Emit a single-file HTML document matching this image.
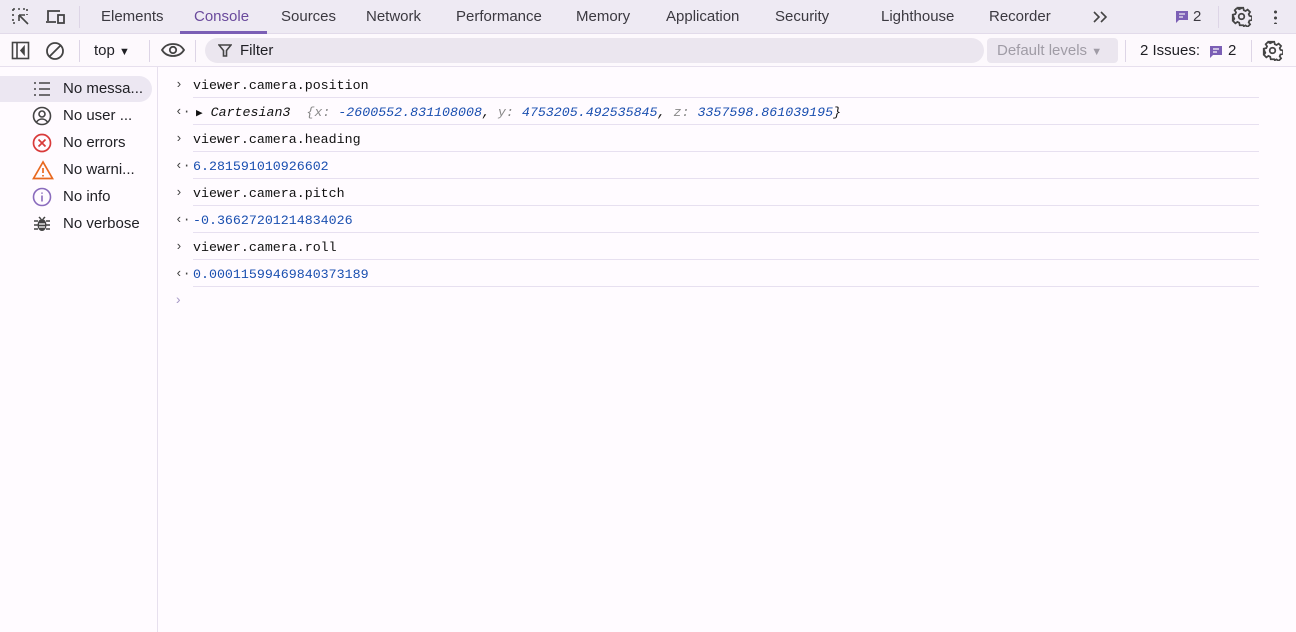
<!DOCTYPE html>
<html><head><meta charset="utf-8"><style>
*{box-sizing:border-box;margin:0;padding:0}
body{width:1296px;height:632px;overflow:hidden;background:#fffbff;font-family:"Liberation Sans",sans-serif;color:#1f1f24;position:relative}
.tabs{position:absolute;left:0;top:0;width:1296px;height:34px;background:#eeeaf3;border-bottom:1px solid #e2dbea}
.tab{position:absolute;top:8px;font-size:15px;color:#3b3940}
.toolbar{position:absolute;left:0;top:34px;width:1296px;height:33px;background:#fdf9fd;border-bottom:1px solid #e7e0ee}
.sep{position:absolute;width:1px;background:#ddd5e6}
.side{position:absolute;left:0;top:67px;width:158px;height:565px;border-right:1px solid #e7e0ee}
.si{position:absolute;left:0;height:26px;width:152px;font-size:15px;color:#1f1f24}
.si span{position:absolute;left:63px;top:4px}
.si svg{position:absolute;left:32px;top:3px}
.mono{font-family:"Liberation Mono",monospace;font-size:13.3px;color:#111}
.row{position:absolute;left:172px;width:1087px;height:27px}
.row:after{content:"";position:absolute;left:21px;right:0;bottom:0;border-bottom:1px solid #e7e0f0}
.row.nb:after{display:none}
.row .t{position:absolute;left:21px;top:7px}
.row .a{position:absolute;left:3px;top:6px;color:#444;font-size:13px}
.num{color:#1a4fb0}
</style></head><body>
<div class="tabs">
<svg style="position:absolute;left:11px;top:7px" width="20" height="20" viewBox="0 0 20 20" fill="none" stroke="#444" stroke-width="1.6"><path d="M2 2h2M7 2h2M12 2h2M2 2v2M2 7v2M2 12v2M2 16h2M16 2v2M16 7v1"/><path d="M8 8l9 9M8 8h6M8 8v6"/></svg>
<svg style="position:absolute;left:45px;top:7px" width="22" height="20" viewBox="0 0 22 20" fill="none" stroke="#444" stroke-width="1.8"><path d="M3 14V4h12M1 15h10"/><rect x="13" y="8" width="6" height="8"/></svg>
<div class="sep" style="left:79px;top:6px;height:22px"></div>
<div class="tab" style="left:101px">Elements</div>
<div class="tab" style="left:194px;color:#6a4a9c">Console</div>
<div style="position:absolute;left:180px;top:31px;width:87px;height:3px;background:#7b5fb5"></div>
<div class="tab" style="left:281px">Sources</div>
<div class="tab" style="left:366px">Network</div>
<div class="tab" style="left:456px">Performance</div>
<div class="tab" style="left:576px">Memory</div>
<div class="tab" style="left:666px">Application</div>
<div class="tab" style="left:775px">Security</div>
<div class="tab" style="left:881px">Lighthouse</div>
<div class="tab" style="left:989px">Recorder</div>
<svg style="position:absolute;left:1092px;top:10px" width="16" height="14" viewBox="0 0 16 14" fill="none" stroke="#444" stroke-width="1.6"><path d="M2 2l5 5-5 5M9 2l5 5-5 5"/></svg>
<svg style="position:absolute;left:1175px;top:10px" width="14" height="14" viewBox="0 0 14 14"><path d="M1 1h12v9H4l-3 3z" fill="#7b5fb5"/><path d="M4 4h6M4 7h4" stroke="#eeeaf3" stroke-width="1.3"/></svg>
<div class="tab" style="left:1193px">2</div>
<div class="sep" style="left:1218px;top:6px;height:22px"></div>
<svg style="position:absolute;left:1231px;top:6px" width="21" height="21" viewBox="0 0 24 24" fill="none" stroke="#444" stroke-width="2"><path d="M10 2h4l.6 2.8 2 .9 2.4-1.6 2.8 2.8-1.6 2.4.9 2 2.9.7v4l-2.9.6-.9 2 1.6 2.4-2.8 2.8-2.4-1.6-2 .9L14 22h-4l-.6-2.9-2-.9-2.4 1.6-2.8-2.8 1.6-2.4-.9-2L2 14v-4l2.9-.7.9-2-1.6-2.4 2.8-2.8 2.4 1.6 2-.9z"/><circle cx="12" cy="12" r="3.2"/></svg>
<div style="position:absolute;left:1274px;top:9px;width:3px;height:15px;background:radial-gradient(circle,#444 1.4px,transparent 1.6px) 0 0/3px 6px repeat-y"></div>
</div>
<div class="toolbar">
<svg style="position:absolute;left:11px;top:7px" width="19" height="19" viewBox="0 0 19 19" fill="none" stroke="#444" stroke-width="1.6"><rect x="1.5" y="1.5" width="16" height="16"/><path d="M6 2v15"/><path d="M13 6l-3 3.5 3 3.5z" fill="#444"/></svg>
<svg style="position:absolute;left:45px;top:7px" width="20" height="20" viewBox="0 0 20 20" fill="none" stroke="#444" stroke-width="1.8"><circle cx="10" cy="10" r="8"/><path d="M4.5 15.5l11-11"/></svg>
<div class="sep" style="left:79px;top:6px;height:22px"></div>
<div style="position:absolute;left:94px;top:8px;font-size:15px">top <span style="font-size:11px">&#9660;</span></div>
<div class="sep" style="left:149px;top:6px;height:22px"></div>
<svg style="position:absolute;left:161px;top:8px" width="24" height="16" viewBox="0 0 24 16" fill="none" stroke="#444" stroke-width="1.8"><path d="M1 8c5-8 17-8 22 0c-5 8-17 8-22 0z"/><circle cx="12" cy="8" r="3.2"/></svg>
<div class="sep" style="left:195px;top:6px;height:22px"></div>
<div style="position:absolute;left:205px;top:4px;width:779px;height:25px;border-radius:13px;background:#ebe6ef"></div>
<svg style="position:absolute;left:218px;top:10px" width="14" height="13" viewBox="0 0 14 13" fill="none" stroke="#444" stroke-width="1.6"><path d="M1 1h12L8.5 6.5V12h-3V6.5z"/></svg>
<div style="position:absolute;left:240px;top:8px;font-size:15px">Filter</div>
<div style="position:absolute;left:987px;top:4px;width:131px;height:25px;border-radius:4px;background:#ebe6ef;color:#a09ca6;font-size:15px;padding:4px 0 0 10px">Default levels <span style="font-size:11px">&#9660;</span></div>
<div class="sep" style="left:1125px;top:6px;height:22px"></div>
<div style="position:absolute;left:1140px;top:8px;font-size:15px">2 Issues:</div>
<svg style="position:absolute;left:1209px;top:11px" width="14" height="14" viewBox="0 0 14 14"><path d="M1 1h12v9H4l-3 3z" fill="#7b5fb5"/><path d="M4 4h6M4 7h4" stroke="#fdf9fd" stroke-width="1.3"/></svg>
<div style="position:absolute;left:1228px;top:8px;font-size:15px">2</div>
<div class="sep" style="left:1251px;top:6px;height:22px"></div>
<svg style="position:absolute;left:1262px;top:6px" width="21" height="21" viewBox="0 0 24 24" fill="none" stroke="#444" stroke-width="2"><path d="M10 2h4l.6 2.8 2 .9 2.4-1.6 2.8 2.8-1.6 2.4.9 2 2.9.7v4l-2.9.6-.9 2 1.6 2.4-2.8 2.8-2.4-1.6-2 .9L14 22h-4l-.6-2.9-2-.9-2.4 1.6-2.8-2.8 1.6-2.4-.9-2L2 14v-4l2.9-.7.9-2-1.6-2.4 2.8-2.8 2.4 1.6 2-.9z"/><circle cx="12" cy="12" r="3.2"/></svg>
</div>
<div class="side">
<div class="si" style="top:9px;background:#ece7f2;border-radius:0 13px 13px 0"><svg width="20" height="20" viewBox="0 0 20 20" stroke="#444" stroke-width="1.6"><path d="M2 4h2M2 10h2M2 16h2M7 4h11M7 10h11M7 16h11"/></svg><span>No messa...</span></div>
<div class="si" style="top:36px"><svg width="20" height="20" viewBox="0 0 20 20" fill="none" stroke="#444" stroke-width="1.6"><circle cx="10" cy="10" r="8.5"/><circle cx="10" cy="8" r="3"/><path d="M4.5 16c3-4 8-4 11 0"/></svg><span>No user ...</span></div>
<div class="si" style="top:63px"><svg width="20" height="20" viewBox="0 0 20 20" fill="none" stroke="#d93a3a" stroke-width="1.7"><circle cx="10" cy="10" r="8.5"/><path d="M6.5 6.5l7 7M13.5 6.5l-7 7"/></svg><span>No errors</span></div>
<div class="si" style="top:90px"><svg width="22" height="20" viewBox="0 0 22 20" fill="none" stroke="#e8681f" stroke-width="1.7"><path d="M11 2L1.5 18.5h19z"/><path d="M11 8v5M11 15v1.5"/></svg><span>No warni...</span></div>
<div class="si" style="top:117px"><svg width="20" height="20" viewBox="0 0 20 20" fill="none" stroke="#8a6bbd" stroke-width="1.6"><circle cx="10" cy="10" r="8.5"/><path d="M10 8.5v6M10 5.5v1.3"/></svg><span>No info</span></div>
<div class="si" style="top:144px"><svg width="20" height="20" viewBox="0 0 20 20" fill="#444"><ellipse cx="10" cy="11" rx="4.5" ry="6"/><path d="M2 7h4M14 7h4M2 11h4M14 11h4M2 15h4M14 15h4M7 3l2 2M13 3l-2 2" stroke="#444" stroke-width="1.5"/><path d="M7 10h6M7 13h6" stroke="#fff" stroke-width="1.2"/></svg><span>No verbose</span></div>
</div>
<div class="mono">
<div class="row" style="top:71px"><span class="a">&#8250;</span><span class="t">viewer.camera.position</span></div>
<div class="row" style="top:98px"><span class="a">&#8249;&#183;</span><span class="t" style="font-style:italic;left:24px"><span style="font-style:normal;font-size:11px">&#9654;</span> Cartesian3 &nbsp;<span style="color:#888">{x:</span> <span class="num">-2600552.831108008</span>, <span style="color:#888">y:</span> <span class="num">4753205.492535845</span>, <span style="color:#888">z:</span> <span class="num">3357598.861039195</span>}</span></div>
<div class="row" style="top:125px"><span class="a">&#8250;</span><span class="t">viewer.camera.heading</span></div>
<div class="row" style="top:152px"><span class="a">&#8249;&#183;</span><span class="t num">6.281591010926602</span></div>
<div class="row" style="top:179px"><span class="a">&#8250;</span><span class="t">viewer.camera.pitch</span></div>
<div class="row" style="top:206px"><span class="a">&#8249;&#183;</span><span class="t num">-0.36627201214834026</span></div>
<div class="row" style="top:233px"><span class="a">&#8250;</span><span class="t">viewer.camera.roll</span></div>
<div class="row" style="top:260px"><span class="a">&#8249;&#183;</span><span class="t num">0.00011599469840373189</span></div>
<div style="position:absolute;left:174px;top:293px;color:#a99cc8;font-size:14px">&#8250;</div>
</div>
</body></html>
